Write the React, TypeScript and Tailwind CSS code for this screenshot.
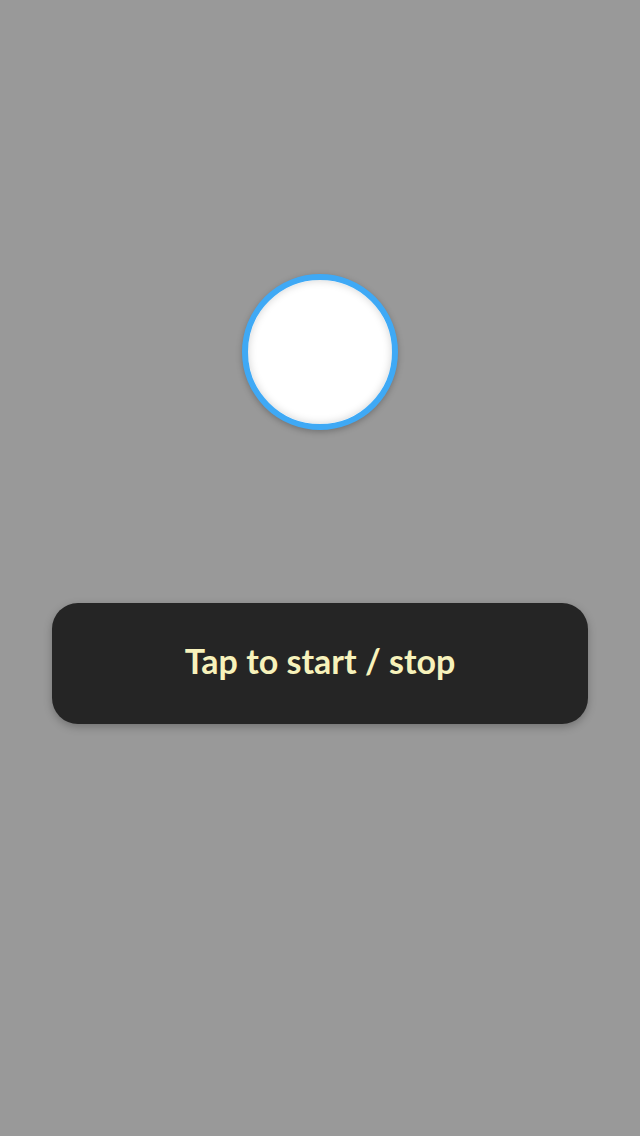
export default function App() {
  return (
    <main className="min-h-[1136px] w-full bg-[#999999] flex flex-col items-center font-['Lato',sans-serif]">
      {/* botón circular */}
      <div className="mt-[274px] w-[156px] h-[156px] rounded-full border-[6px] border-[#3fa9f5] bg-white shadow-[0_2px_6px_rgba(0,0,0,0.25),inset_0_0_8px_rgba(0,0,0,0.18)]" />

      {/* botón de texto */}
      <button className="mt-[173px] w-[536px] h-[121px] rounded-[26px] bg-[#252525] shadow-[0_3px_8px_rgba(0,0,0,0.25)] flex items-center justify-center pb-[5px]">
        <span className="text-[34px] font-bold text-[#f7f2bb] leading-none">Tap to start / stop</span>
      </button>
    </main>
  );
}
